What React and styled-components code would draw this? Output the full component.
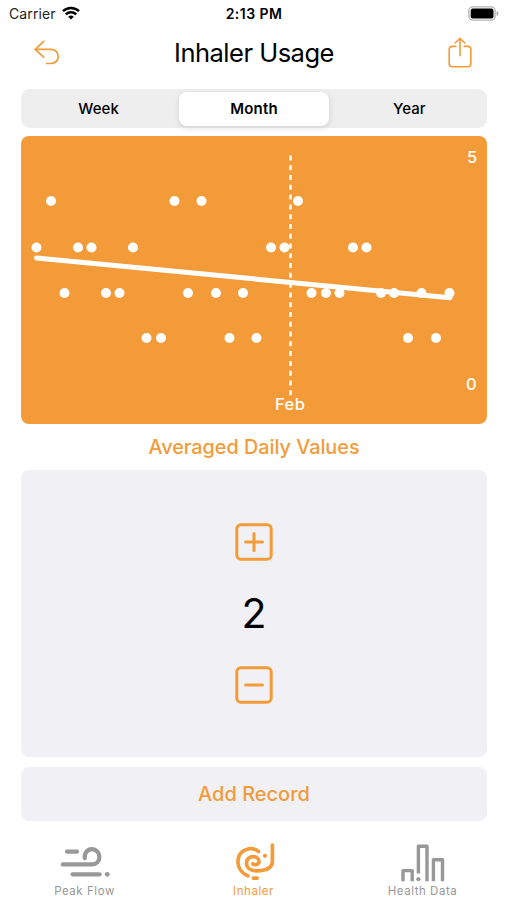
import React, { useState } from "react";
import styled, { createGlobalStyle } from "styled-components";

const ORANGE = "#f29b38";
const GREY = "#989898";

const GlobalStyle = createGlobalStyle`
  * {
    box-sizing: border-box;
  }

  body {
    margin: 0;
    background: #fff;
    font-family: Inter, "Liberation Sans", sans-serif;
    color: #000;
  }

  button {
    border: 0;
    padding: 0;
    background: none;
    font-family: inherit;
    color: inherit;
  }
`;

// value -> x positions of the days with that value
const usage = [
  { y: 64.5, days: [30.5, 154, 181, 277.5] },
  { y: 111, days: [16, 57.5, 71, 112.5, 250.5, 264, 332.5, 346] },
  { y: 156.5, days: [44, 85.5, 99, 167.5, 195.5, 222.5, 291, 305.5, 319, 360.5, 373.5, 401, 429] },
  { y: 201.5, days: [126, 140.5, 209, 236, 387.5, 415.5] },
];

const WifiIcon = () => (
  <svg width="18" height="14" viewBox="0 0 18 14" fill="none" stroke="#000" strokeWidth="2.5">
    <path d="M1 5.1a11.6 11.6 0 0 1 16 0" />
    <path d="M3.8 8.3a7.6 7.6 0 0 1 10.4 0" />
    <path d="M9 13.6l-2.8-2.9a4.1 4.1 0 0 1 5.6 0z" fill="#000" stroke="none" />
  </svg>
);

const BatteryIcon = () => (
  <svg width="31" height="15" viewBox="0 0 31 15">
    <rect x="0.9" y="0.9" width="26.2" height="13.2" rx="4" fill="#fff" stroke="#b4b4b4" strokeWidth="1.4" />
    <rect x="2.7" y="2.6" width="22.8" height="9.8" rx="2.2" fill="#000" />
    <path d="M28.6 5.2c2.4.7 2.4 3.9 0 4.6z" fill="#a5a5a5" />
  </svg>
);

const BackIcon = () => (
  <svg width="26" height="26" viewBox="0 0 26 26" fill="none" stroke={ORANGE} strokeWidth="1.7" strokeLinecap="round" strokeLinejoin="round">
    <path d="M9.7 1.4L1.2 9.4l8.5 7.8" />
    <path d="M1.6 9.4h15.6a7.05 7.05 0 0 1 0 14.1h-4.5" />
  </svg>
);

const ShareIcon = () => (
  <svg width="24" height="31" viewBox="0 0 24 31" fill="none" stroke={ORANGE} strokeWidth="1.6" strokeLinecap="round" strokeLinejoin="round">
    <path d="M7.8 9.4H4.2a3 3 0 0 0-3 3v14.4a3 3 0 0 0 3 3h15.6a3 3 0 0 0 3-3V12.4a3 3 0 0 0-3-3h-3.6" />
    <path d="M12 18.8V1.5M7.2 6L12 1.3 16.8 6" />
  </svg>
);

const StepIcon = ({ plus }) => (
  <svg width="38" height="38" viewBox="0 0 38 38" fill="none" stroke={ORANGE} strokeWidth="3" strokeLinecap="round">
    <rect x="1.8" y="1.8" width="34.4" height="34.4" rx="4" />
    <path d="M10.5 19h17" />
    {plus && <path d="M19 10.5v17" />}
  </svg>
);

const PeakFlowIcon = () => (
  <svg width="50" height="38" viewBox="0 0 50 38" fill="none" stroke={GREY} strokeWidth="4.2" strokeLinecap="round">
    <path d="M7 5.7h10" />
    <path d="M24.8 12.2c-.8-5 2.6-9 7.2-9a7.5 7.5 0 0 1 7.4 7.6c0 4.5-3 7.6-7.6 7.6H2.8" />
    <path d="M12.6 28.3h27" />
    <circle cx="47.2" cy="28.3" r="2.4" fill={GREY} stroke="none" />
  </svg>
);

const InhalerIcon = () => (
  <svg width="43" height="44" viewBox="0 0 43 44" fill="none" stroke={ORANGE} strokeWidth="3.7" strokeLinecap="round">
    <path d="M26.6 11.4C17.5 5 5.9 11 5.9 21.7c0 6.3 4.1 11.8 10 14.2" />
    <path d="M20.8 23.8c1.8 1.5 6.2 1 6.2-2.2 0-2.8-2.6-5-5.7-5-3.9 0-6.8 2.8-6.8 6.3 0 5.2 4.6 7.9 10.3 7.9 9.4 0 15.6-3.2 15.6-10V5" />
    <circle cx="33" cy="15.8" r="2.1" fill={ORANGE} stroke="none" />
    <path d="M21.3 38.1h3.8" />
  </svg>
);

const HealthIcon = () => (
  <svg width="44" height="40" viewBox="0 0 44 40" fill="none" stroke={GREY} strokeWidth="3.4" strokeLinejoin="round">
    <path d="M2 37.2V26.6h9.2v10.6" />
    <path d="M17.4 29.4V2.2H26v35" />
    <path d="M32.4 37.2V15.7h9.1v21.5" />
    <circle cx="17.4" cy="35.2" r="2.1" fill={GREY} stroke="none" />
  </svg>
);

const UsageChart = () => (
  <Chart viewBox="0.5 -0.5 466 288">
    {usage.map(({ y, days }) =>
      days.map((x) => <circle key={`${x}-${y}`} cx={x} cy={y} r="5" />)
    )}
    <line x1="270" x2="270" y1="19" y2="259" strokeWidth="2.4" strokeDasharray="5 4.78" />
    <line x1="16" x2="429.5" y1="121.4" y2="161.3" strokeWidth="5" strokeLinecap="round" />
    <text x="446.5" y="26">5</text>
    <text x="445.5" y="253">0</text>
    <text x="254.5" y="273.5" textLength="30">Feb</text>
  </Chart>
);

const ranges = ["Week", "Month", "Year"];

const tabs = [
  { label: "Peak Flow", Icon: PeakFlowIcon },
  { label: "Inhaler", Icon: InhalerIcon },
  { label: "Health Data", Icon: HealthIcon },
];

export default function App() {
  const [range, setRange] = useState("Month");
  const [count, setCount] = useState(2);

  return (
    <Screen>
      <GlobalStyle />
      <StatusBar>
        <Carrier>
          Carrier <WifiIcon />
        </Carrier>
        <Clock>2:13 PM</Clock>
        <BatteryIcon />
      </StatusBar>
      <Header>
        <IconButton aria-label="Back"><BackIcon /></IconButton>
        <Title>Inhaler Usage</Title>
        <IconButton aria-label="Share"><ShareIcon /></IconButton>
      </Header>
      <Content>
        <Segments>
          {ranges.map((name) => (
            <Segment key={name} $active={name === range} onClick={() => setRange(name)}>
              {name}
            </Segment>
          ))}
        </Segments>
        <UsageChart />
        <Caption>Averaged Daily Values</Caption>
        <Counter>
          <IconButton aria-label="More" onClick={() => setCount(count + 1)}>
            <StepIcon plus />
          </IconButton>
          <Count>{count}</Count>
          <IconButton aria-label="Less" onClick={() => setCount(Math.max(0, count - 1))}>
            <StepIcon />
          </IconButton>
        </Counter>
        <AddButton>Add Record</AddButton>
      </Content>
      <TabBar>
        {tabs.map(({ label, Icon }) => (
          <Tab key={label} $active={label === "Inhaler"}>
            <Icon />
            <TabLabel>{label}</TabLabel>
          </Tab>
        ))}
      </TabBar>
    </Screen>
  );
}

const Screen = styled.div`
  display: flex;
  flex-direction: column;
  width: 507px;
  height: 900px;
  overflow: hidden;
  background: #fff;
`;

const StatusBar = styled.div`
  display: grid;
  grid-template-columns: 1fr auto 1fr;
  align-items: center;
  height: 26px;
  padding: 0 8px 0 9px;

  > :last-child {
    justify-self: end;
  }
`;

const Carrier = styled.div`
  display: flex;
  align-items: center;
  gap: 6px;
  font-size: 14px;
  letter-spacing: 0.1px;
  color: #222;
`;

const Clock = styled.div`
  font-size: 14px;
  font-weight: 600;
  letter-spacing: 0.45px;
`;

const Header = styled.header`
  display: flex;
  align-items: center;
  justify-content: space-between;
  height: 53px;
  padding: 0 35px 0 34px;
`;

const IconButton = styled.button`
  display: flex;
`;

const Title = styled.h1`
  margin: 0;
  font-size: 25.5px;
  font-weight: 400;
  letter-spacing: -0.5px;
`;

const Content = styled.main`
  display: flex;
  flex-direction: column;
  margin: 10px 20px 0 21px;
`;

const Segments = styled.div`
  display: grid;
  grid-template-columns: repeat(3, 1fr);
  gap: 5px;
  height: 39px;
  padding: 2.5px;
  border-radius: 9px;
  background: #eeeeef;
`;

const Segment = styled.button`
  padding-bottom: 1px;
  border-radius: 8px;
  font-size: 15px;
  font-weight: ${(props) => (props.$active ? 600 : 500)};
  letter-spacing: ${(props) => (props.$active ? "0.2px" : "0.1px")};
  background: ${(props) => (props.$active ? "#fff" : "transparent")};
  box-shadow: ${(props) => (props.$active ? "0 2px 6px rgba(0, 0, 0, 0.12)" : "none")};
`;

const Chart = styled.svg`
  display: block;
  width: 466px;
  height: 288px;
  margin-top: 8px;
  border-radius: 8px;
  background: ${ORANGE};
  fill: #fff;
  stroke: none;

  line {
    stroke: #fff;
  }

  text {
    font-size: 16.5px;
    font-weight: 500;
  }
`;

const Caption = styled.div`
  height: 45.5px;
  line-height: 47px;
  text-align: center;
  font-size: 19.8px;
  font-weight: 500;
  color: ${ORANGE};
`;

const Counter = styled.section`
  display: flex;
  flex-direction: column;
  align-items: center;
  justify-content: space-between;
  height: 287px;
  padding: 53px 0;
  border-radius: 8px;
  background: #f1f0f5;
`;

const Count = styled.div`
  font-size: 41px;
  line-height: 48px;
`;

const AddButton = styled.button`
  height: 53.5px;
  margin-top: 10.5px;
  border-radius: 8px;
  background: #f1f0f5;
  font-size: 20px;
  font-weight: 500;
  color: ${ORANGE};
`;

const TabBar = styled.nav`
  display: grid;
  grid-template-columns: repeat(3, 1fr);
  height: 79.5px;
`;

const Tab = styled.div`
  display: flex;
  flex-direction: column;
  align-items: center;
  justify-content: flex-end;
  padding-bottom: 2px;
  color: ${(props) => (props.$active ? ORANGE : GREY)};
`;

const TabLabel = styled.span`
  font-size: 11.5px;
  line-height: 14px;
  letter-spacing: 0.55px;
`;
